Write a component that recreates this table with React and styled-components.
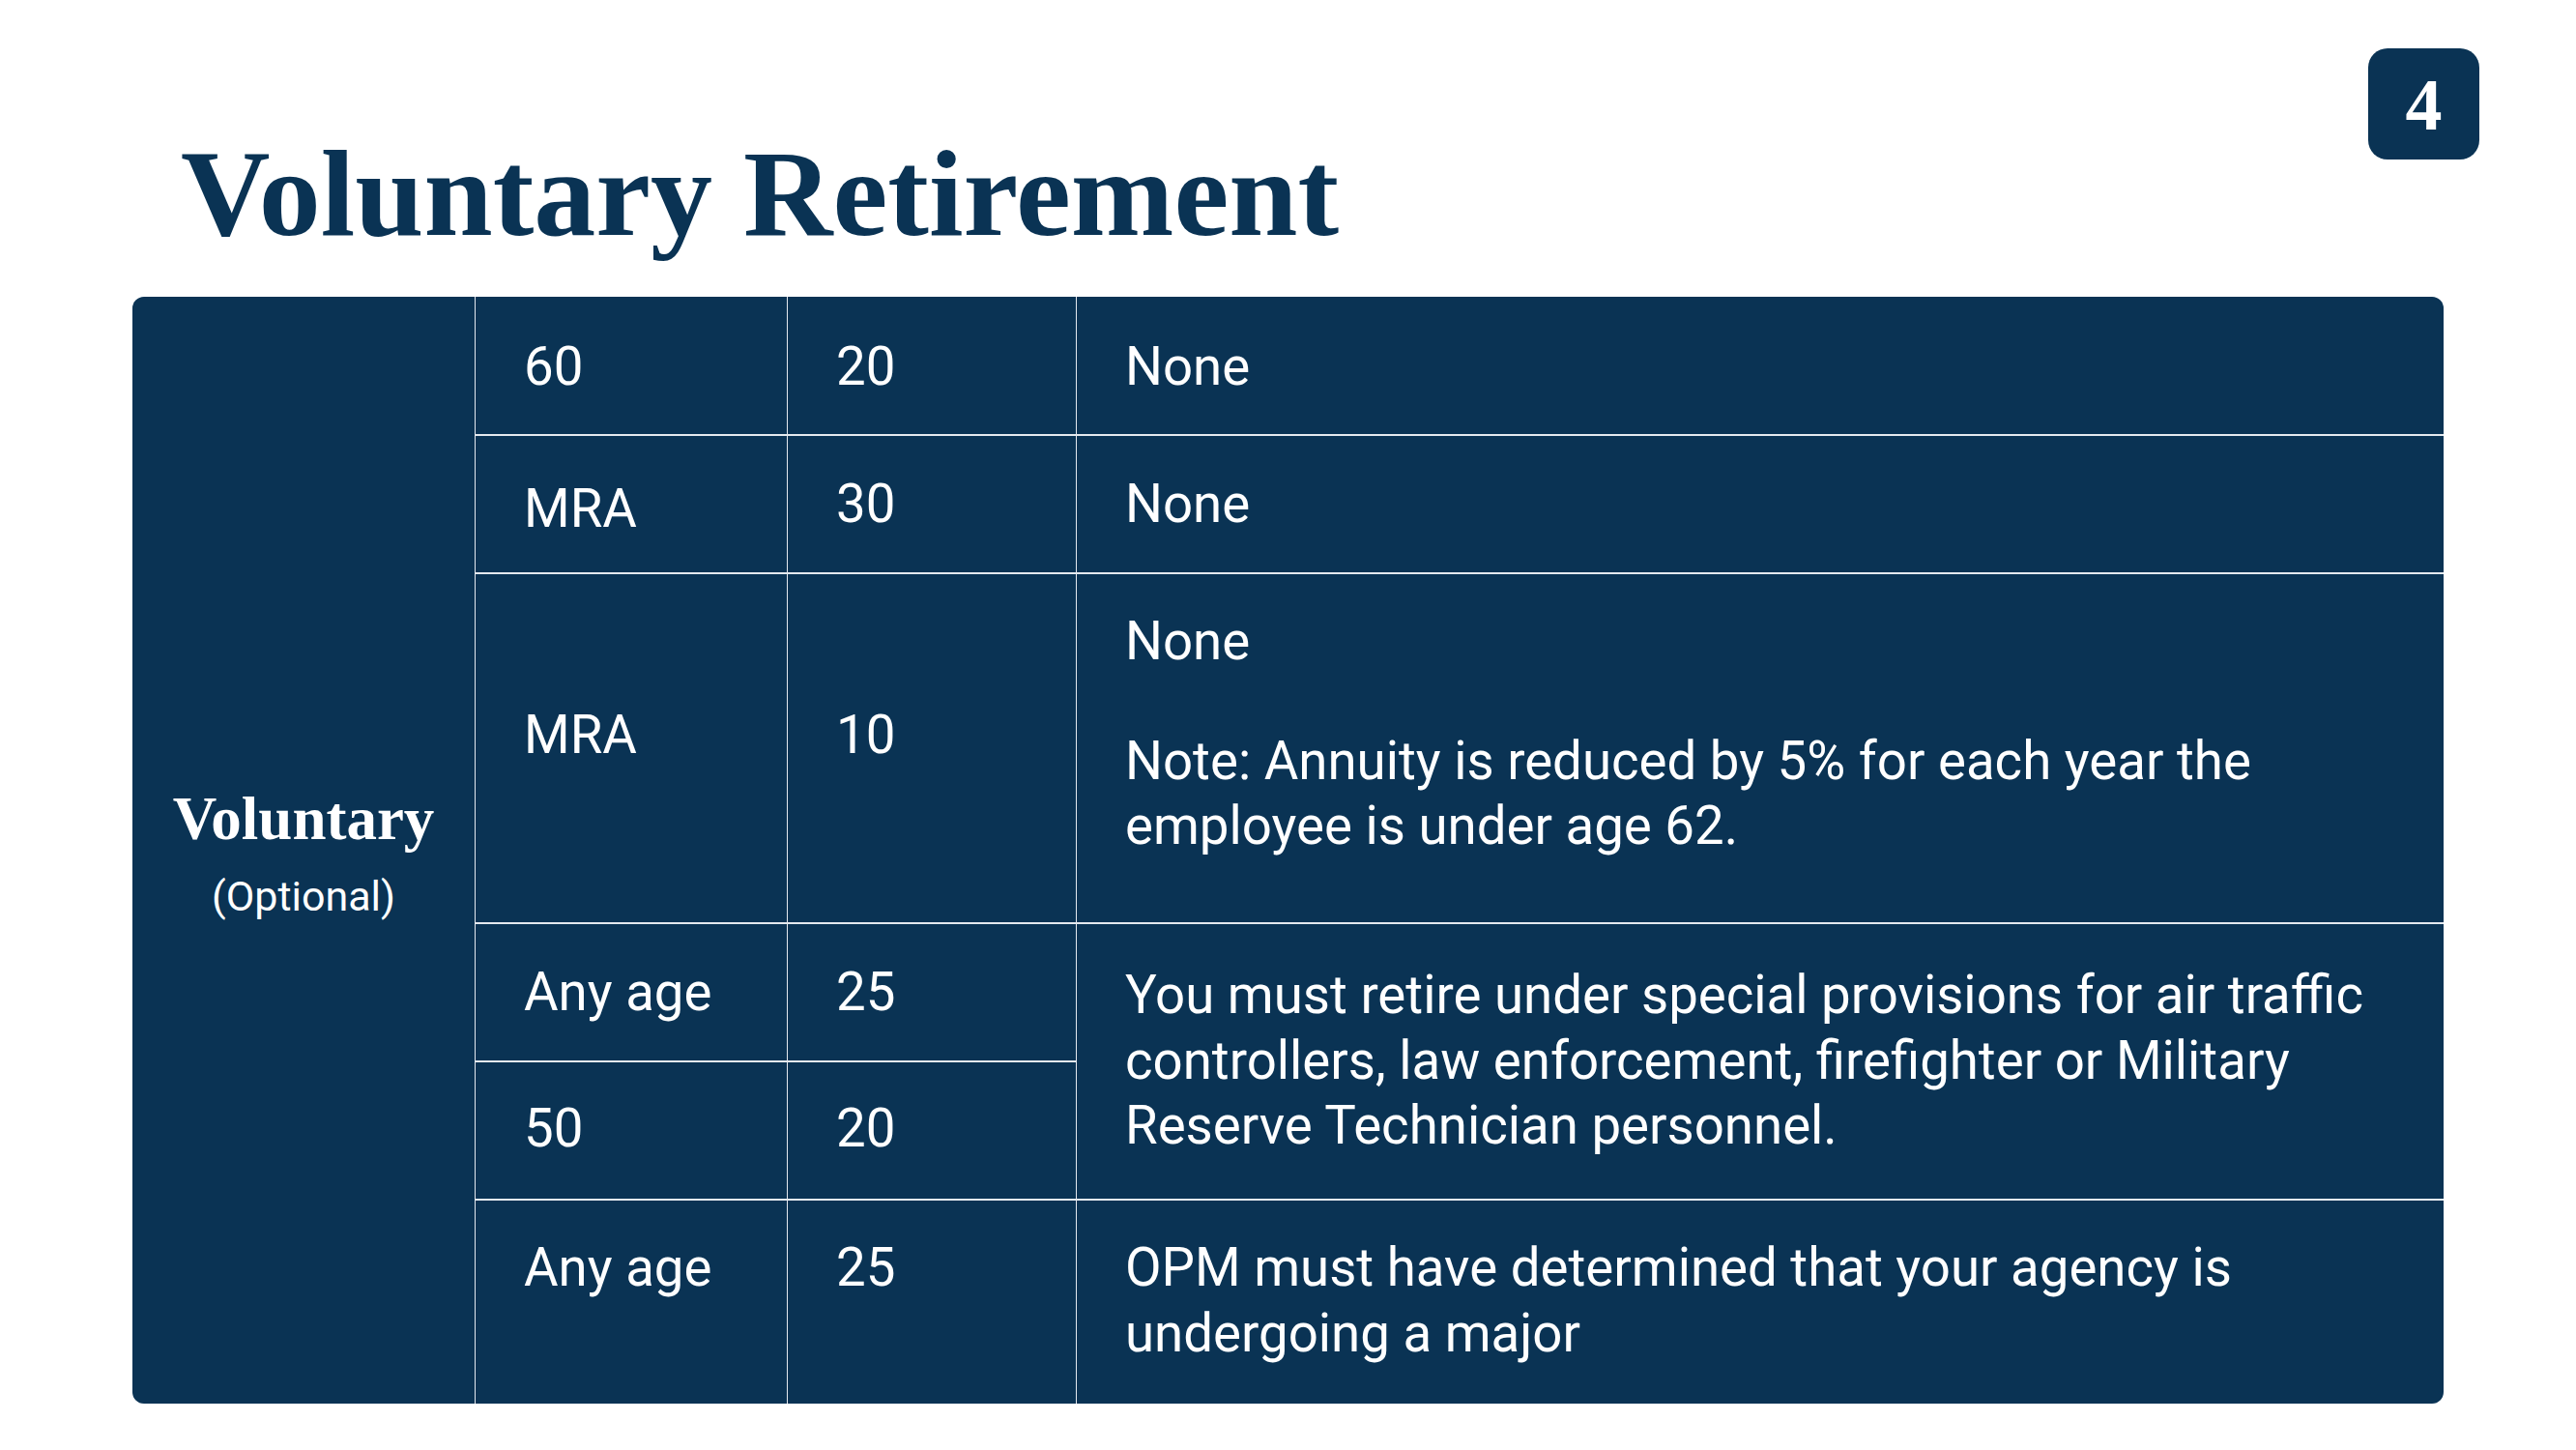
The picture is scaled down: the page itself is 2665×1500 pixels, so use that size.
import React from "react";
import styled, { createGlobalStyle } from "styled-components";

const navy = "#0a3354";
const line = "#e4e9ef";

const GlobalStyle = createGlobalStyle`
  html, body {
    margin: 0;
    padding: 0;
    background: #ffffff;
  }
  body {
    font-family: Roboto, "Liberation Sans", sans-serif;
  }
`;

const Page = styled.div`
  width: 2665px;
  height: 1500px;
  box-sizing: border-box;
  padding: 0 137px;
  background: #ffffff;
`;

const Header = styled.header`
  display: flex;
  justify-content: space-between;
  align-items: flex-start;
  height: 307px;
  box-sizing: border-box;
  padding-top: 50px;
`;

const Title = styled.h1`
  margin: 86px 0 0 0;
  padding-left: 50px;
  font-family: "Liberation Serif", "DejaVu Serif", serif;
  font-weight: 700;
  font-size: 128px;
  line-height: 1;
  color: ${navy};
`;

const Badge = styled.div`
  display: flex;
  align-items: center;
  justify-content: center;
  width: 115px;
  height: 115px;
  margin-right: -37px;
  border-radius: 20px;
  background: ${navy};
  color: #ffffff;
  font-family: "Liberation Serif", "DejaVu Serif", serif;
  font-weight: 700;
  font-size: 76px;
  line-height: 1;
`;

const Table = styled.div`
  display: grid;
  grid-template-columns: 354px 322px 298px 1414px;
  grid-template-rows: 142px 141px 360px 141px 141px 210px;
  column-gap: 1px;
  row-gap: 2px;
  background: ${line};
  border-radius: 12px;
  overflow: hidden;
`;

const TypeCell = styled.div`
  grid-column: 1;
  grid-row: 1 / span 6;
  display: flex;
  flex-direction: column;
  align-items: center;
  justify-content: center;
  padding-top: 6px;
  background: ${navy};
  color: #ffffff;
  text-align: center;
`;

const TypeName = styled.div`
  font-family: "Liberation Serif", "DejaVu Serif", serif;
  font-weight: 700;
  font-size: 63px;
  line-height: 72px;
`;

const TypeNote = styled.div`
  margin-top: 16px;
  font-size: 43px;
  line-height: 56px;
`;

const Cell = styled.div`
  grid-column: ${(p) => p.$col};
  grid-row: ${(p) => p.$row};
  box-sizing: border-box;
  padding: ${(p) => p.$top || 37}px 36px 0 50px;
  background: ${navy};
  color: #ffffff;
  font-size: 54.6px;
  line-height: 67.5px;
`;

const Para = styled.p`
  margin: 0;
  & + & {
    margin-top: 56px;
  }
`;

const rows = [
  { row: 1, age: "60", years: "20", ageTop: 39, top: 39 },
  { row: 2, age: "MRA", years: "30", ageTop: 42, top: 37 },
  { row: 3, age: "MRA", years: "10", ageTop: 133, top: 133 },
  { row: 4, age: "Any age", years: "25" },
  { row: 5, age: "50", years: "20", top: 35, ageTop: 35 },
  { row: 6, age: "Any age", years: "25", top: 36, ageTop: 36 },
];

export default function App() {
  return (
    <>
      <GlobalStyle />
      <Page>
        <Header>
          <Title>Voluntary Retirement</Title>
          <Badge>4</Badge>
        </Header>
        <Table>
          <TypeCell>
            <TypeName>Voluntary</TypeName>
            <TypeNote>(Optional)</TypeNote>
          </TypeCell>
          {rows.map((r) => (
            <React.Fragment key={r.row}>
              <Cell $col={2} $row={r.row} $top={r.ageTop}>
                {r.age}
              </Cell>
              <Cell $col={3} $row={r.row} $top={r.top}>
                {r.years}
              </Cell>
            </React.Fragment>
          ))}
          <Cell $col={4} $row={1} $top={39}>
            None
          </Cell>
          <Cell $col={4} $row={2}>
            None
          </Cell>
          <Cell $col={4} $row={3} $top={36}>
            <Para>None</Para>
            <Para>
              Note: Annuity is reduced by 5% for each year the employee is
              under age 62.
            </Para>
          </Cell>
          <Cell $col={4} $row="4 / span 2" $top={40}>
            You must retire under special provisions for air traffic
            controllers, law enforcement, firefighter or Military Reserve
            Technician personnel.
          </Cell>
          <Cell $col={4} $row={6} $top={36}>
            OPM must have determined that your agency is undergoing a major
          </Cell>
        </Table>
      </Page>
    </>
  );
}
